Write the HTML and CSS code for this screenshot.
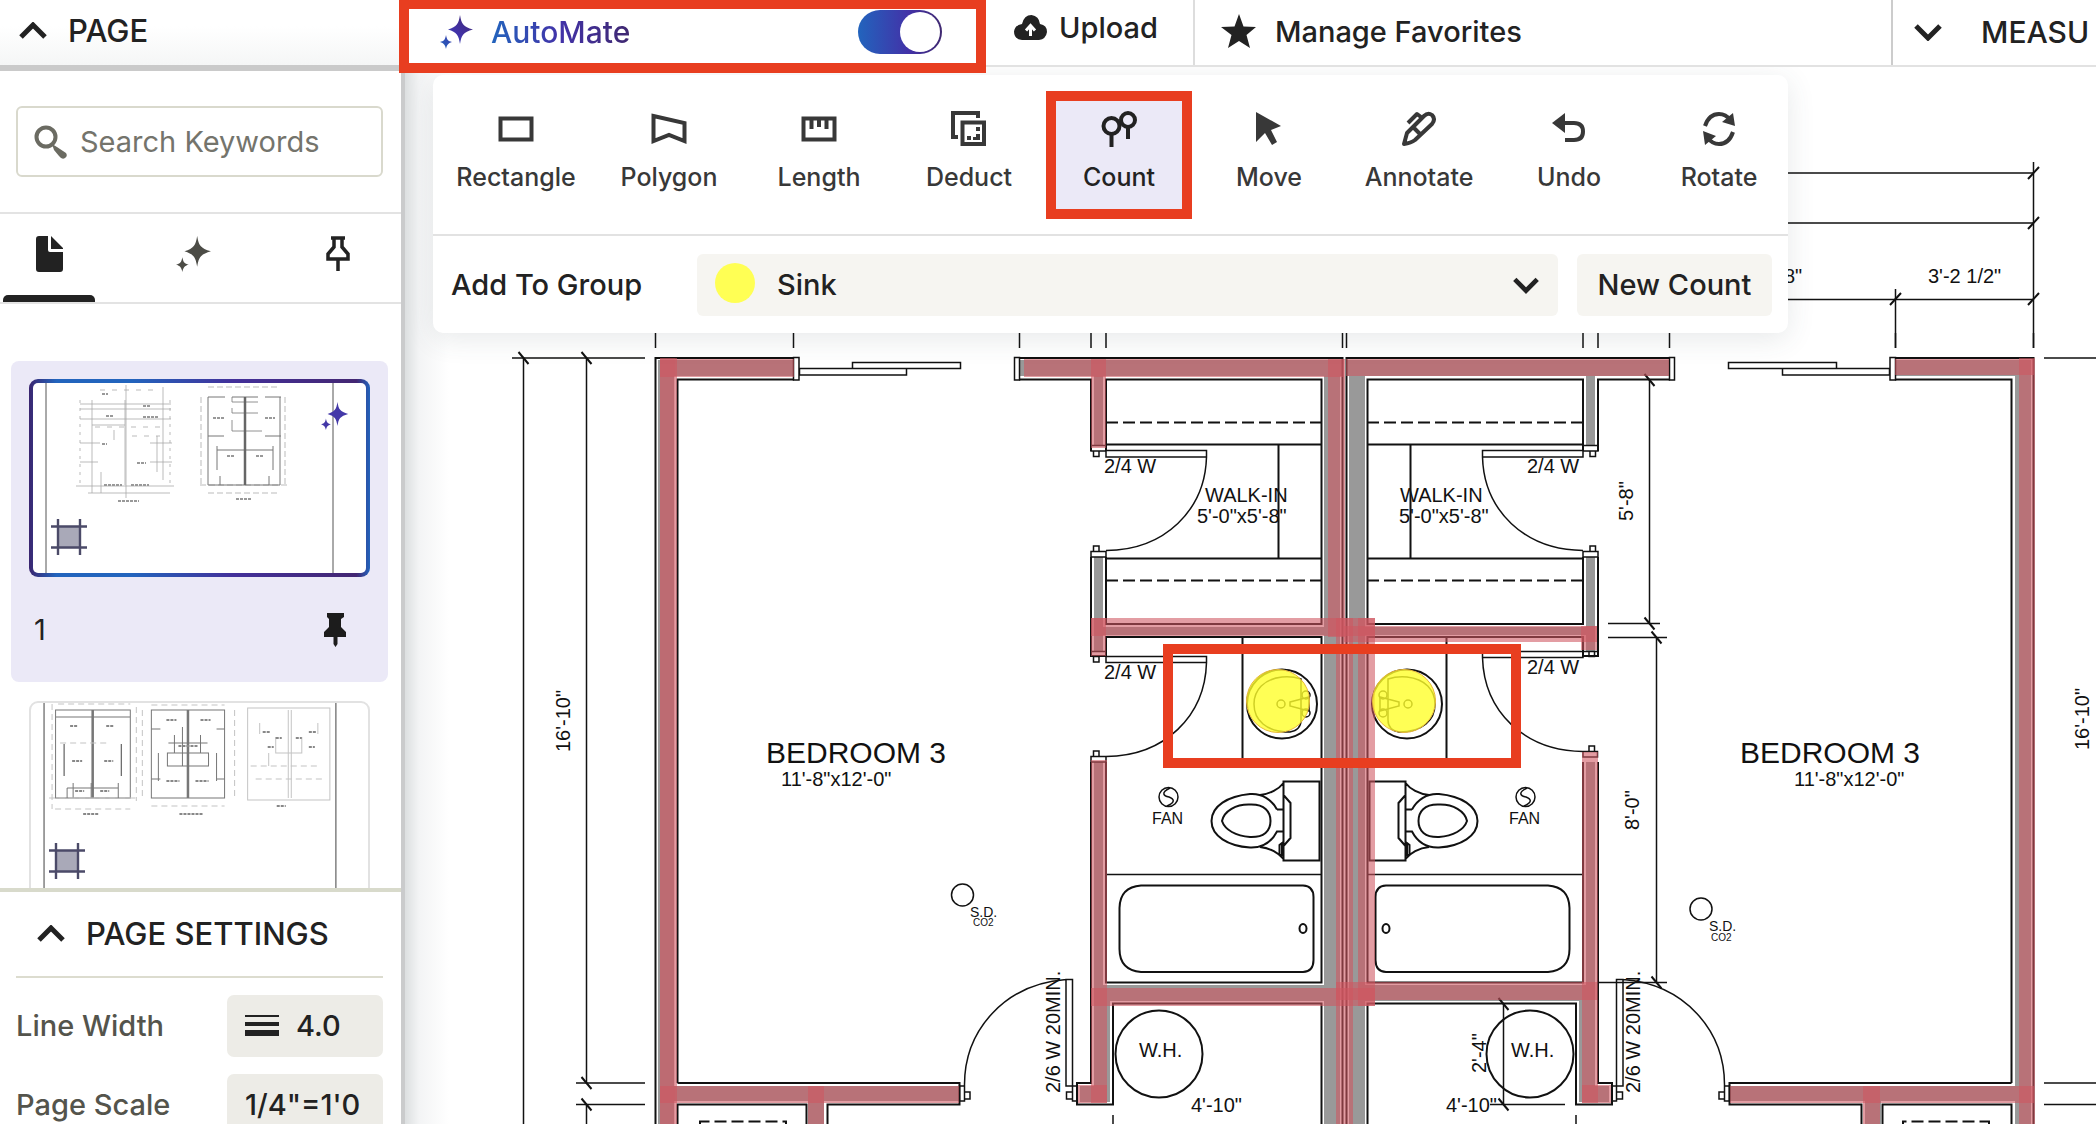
FILE: index.html
```html
<!DOCTYPE html>
<html lang="en">
<head>
<meta charset="utf-8">
<title>Takeoff plan</title>
<link rel="stylesheet" href="styles.css">
</head>
<body>
<svg class="defs" aria-hidden="true">
  <defs>
    <linearGradient id="brand" x1="0" y1="1" x2="1" y2="0"><stop offset="0" stop-color="#2264bd"/><stop offset=".5" stop-color="#4232a8"/><stop offset="1" stop-color="#3f2870"/></linearGradient>
    <symbol id="sparkle" viewBox="0 0 34 34"><path d="M20 0C21.500 9 23 11.500 33 14.500C23 17.500 21.500 20 20 29C18.500 20 17 17.500 8 14.500C17 11.500 18.500 9 20 0ZM6 20C7 25 8 26 12 27C8 28.500 7 29.500 6 34C5 29.500 4 28.500 0 27C4 26 5 25 6 20Z"/></symbol>
    <symbol id="chevron" viewBox="0 0 30 18"><path d="M3 3L15 15L27 3" fill="none" stroke="#222" stroke-width="5"/></symbol>
    <symbol id="crop" viewBox="0 0 36 36"><path d="M7 7H29V29H7Z" fill="#a9a9b8"/><path d="M7 0V36M29 0V36M0 7.500H36M0 28.500H36" stroke="#4b4a68" stroke-width="2.400" fill="none"/></symbol>
  </defs>
</svg>
<div class="app">
  <aside class="sidebar">
    <button class="side-head"><svg class="chev flip"><use href="#chevron"/></svg>PAGE</button>
    <div class="search">
      <label class="search-box">
        <svg width="34" height="34" viewBox="0 0 34 34"><circle cx="12" cy="12" r="9.500" fill="none" stroke="#6b6b62" stroke-width="4"/><path d="M18 19L23 22L32 28Q34 31 31 33Q28 35 25 31L20 25Z" fill="#6b6b62"/></svg>
        <input type="search" placeholder="Search Keywords" aria-label="Search Keywords">
      </label>
    </div>
    <nav class="tabs">
      <button class="tab active" aria-label="Pages"><svg width="28" height="36" viewBox="0 0 28 36"><path d="M3 0H12V14Q12 16 14 16H27V33Q27 36 24 36H3Q0 36 0 33V3Q0 0 3 0ZM15 0L27 12V13H15Z" fill="#222"/></svg></button>
      <button class="tab" aria-label="AutoMate"><svg width="36" height="36" fill="#4c4c46"><use href="#sparkle"/></svg></button>
      <button class="tab" aria-label="Pinned"><svg width="24" height="36" viewBox="0 0 24 36"><path d="M5 2H19M8 2V11L2 18V23H22V18L16 11V2M12 23V35" fill="none" stroke="#222" stroke-width="3.500"/></svg></button>
    </nav>
    <div class="pages">
      <article class="card selected">
        <div class="thumb">
          <svg viewBox="33 383 333 190" preserveAspectRatio="none">
            <path d="M46 383V573M333 383V573" stroke="#555" fill="none"/>
            <g fill="none" stroke="#aaa" stroke-width=".8">
              <path d="M92 400V493M125 400V485M163 387V480M126 385V498M80 404H171M80 409H171M80 419H171M92 425H125M80 443H100M150 443H172M80 462H98M150 462H172M76 486H174M88 493H170M101 472V493M157 436V472M114 430V440"/>
              <path d="M80 400V485M170 400V485" stroke-dasharray="3 5"/>
              <path d="M100 390H160M95 427H160M132 436H160" stroke-dasharray="5 7"/>
              <path d="M201 397V485M285 397V485M200 485H288M208 493H280M208 387H280" stroke-dasharray="6 3"/>
            </g>
            <g fill="none" stroke="#777" stroke-width="1">
              <path d="M208 397V485H280V397M208 397H225M232 397H258M265 397H281M208 436H224M265 436H281M217 446V470M273 446V470M217 450H273M220 476V485M269 476V485" />
              <path d="M232 397V402H258M232 408V413H258M232 420V431H262" stroke-width=".8"/>
            </g>
            <path d="M245 397V485" stroke="#666" stroke-width="2.500"/>
            <path d="M106 416H114M143 406H150M143 417H158M137 463H146M102 444H107M102 394H108M213 418H224M265 418H275M227 456H234M256 456H263M236 499H252M118 501H139M104 485H122M131 485H149" stroke="#999" stroke-width="2" stroke-dasharray="3 1"/>
          </svg>
          <svg class="crop-icon"><use href="#crop"/></svg>
          <svg class="thumb-star" fill="#4338a8"><use href="#sparkle"/></svg>
        </div>
        <div class="card-foot"><span>1</span><svg width="22" height="34" viewBox="0 0 22 34"><path d="M3 0H20V4L17 6V14L22 19V24H0V19L5 14V6L3 4ZM9.500 24H13.500V31L11.500 34L9.500 31Z" fill="#1c1c1c"/></svg></div>
      </article>
      <article class="card">
        <div class="thumb plain">
          <svg viewBox="31 702 336 194" preserveAspectRatio="none">
            <path d="M44 702V896M335 702V896" stroke="#444" fill="none"/>
            <g fill="none" stroke="#777">
              <path d="M55.500 709H130V797H55.500ZM151 709H224V797H151ZM55 716H130M67 787H118M67 787V797M73 782V797M91 782V797M118 782V797"/>
              <path d="M64 743V775M121 743V775" stroke="#444"/>
              <path d="M167 752H208V765H167ZM174 734V752M200 734V752M182 726V765M158 752V780M216 752V780M151 728H160M216 728H224M151 778H160M216 778H224M168 742H207"/>
            </g>
            <path d="M92.500 709V797M187.500 709V797" stroke="#777" stroke-width="2.500"/>
            <g fill="none" stroke="#c4c4c4">
              <path d="M247 707H329V799H247ZM287.500 709V797M290.500 709V797M275 736V752H301V736M268 752V765M259 722V733M317 722V733"/>
              <path d="M52 703V808M136 706V800M142 709V797M234 709V797M49 797H136M55 808H130M151 805H224M58 703H130M151 704H224M60 742H110M250 765H320M255 778H325" stroke-dasharray="6 4"/>
            </g>
            <path d="M70 725H78M106 725H114M72 760H82M104 760H113M75 790H84M100 790H109M166 719H176M200 719H210M166 780H179M195 780H208M83 813H99M179 813H203M276 805H285M262 731H270M308 731H316M267 746H273M308 746H314M178 745H198M275 737H281M295 737H301" stroke="#888" stroke-width="2" stroke-dasharray="3 1"/>
          </svg>
          <svg class="crop-icon"><use href="#crop"/></svg>
        </div>
      </article>
    </div>
    <section class="settings">
      <button class="settings-head"><svg class="chev flip"><use href="#chevron"/></svg>PAGE SETTINGS</button>
      <div class="row"><span>Line Width</span><button class="value"><svg width="34" height="22" viewBox="0 0 34 22"><path d="M0 0H34V2H0ZM0 7H34V11H0ZM0 15H34V21H0Z" fill="#222"/></svg>4.0</button></div>
      <div class="row"><span>Page Scale</span><button class="value">1/4"=1'0</button></div>
    </section>
  </aside>

  <main class="main">
    <header class="topbar">
      <label class="automate">
        <svg width="34" height="34" fill="url(#brand)"><use href="#sparkle"/></svg>
        <span class="brand-text">AutoMate</span>
        <input type="checkbox" class="switch" checked>
      </label>
      <span class="mark"></span>
      <button class="upload"><svg width="34" height="26" viewBox="0 0 34 26"><path d="M8 25Q0 24 0 16.500Q1 10 8 9Q10 0 17.500 0Q25 1 26 9Q33 10 33 17Q32 24 25 25Z" fill="#222"/><path d="M16.500 21V12M12 15.500L16.500 10.500L21 15.500" fill="none" stroke="#fff" stroke-width="3"/></svg>Upload</button>
      <button class="favorites"><svg width="36" height="35" viewBox="0 0 36 35"><path d="M18 0L22.500 12.500L35 13L25.500 21L29 34L18 27L7 34L10.500 21L0 13L13.500 12.500Z" fill="#222"/></svg>Manage Favorites</button>
      <button class="measure"><svg class="chev"><use href="#chevron"/></svg>MEASU</button>
    </header>

    <div class="canvas">
      <svg class="plan" viewBox="405 67 1691 1057" preserveAspectRatio="xMinYMin slice">
        <defs>
          <!-- one half of the duplex; the other half is its mirror image -->
          <g id="half">
            <g class="gray">
              <path d="M658 360H674V1124H658ZM674 360H794V376H674ZM1019 360H1342V376H1019ZM1094 376H1103V445H1094ZM1094 557H1103V651H1094ZM1103 627H1324V635H1103ZM1324 376H1340V1124H1324ZM674 1086H959V1101H674ZM808 1101H824V1124H808ZM1094 762H1103V985H1094ZM1094 985H1324V1001H1094ZM1094 1001H1110V1102H1094ZM1080 1086H1094V1102H1080Z"/>
            </g>
            <g class="ln">
              <path d="M655.500 1124V358H794M677.500 1083V379.500H794M1019.500 358H1342.500V1124M1019 379.500H1091V451M1106 451V379.500H1321.500V624H1106V557M1091 557V656H1106V637H1321.500V982.500H1106V762M1091 762V1083H1077V1104.500H1113V1003.500H1321.500V1124"/>
              <path d="M1106 444.500H1321M1106 558.500H1321M1278.500 444V558M1242.500 637V765M677.500 1083H959.500V1104.500H827.500V1124M806.500 1124V1104.500H677.500V1124"/>
              <path d="M1106 422.500H1321M1106 580.500H1321M700 1124V1121.500H786V1124" stroke-dasharray="12 5"/>
              <path class="thin" d="M793.500 357.500H799V380H793.500ZM852.500 362.500H960.500V368.500H852.500ZM799.500 368.500H906.500V375H799.500ZM1014.500 357.500H1019.500V380H1014.500ZM1106 874.500H1321M1091 445.500H1106V451H1091ZM1093.500 451H1099V456.500H1093.500ZM1106 450.500H1206.500V457H1106ZM1206.500 457C1205 510 1165 550 1106 550.500M1093.500 546H1099V551.500H1093.500ZM1091 551.500H1106V557H1091ZM959.500 1086H964.500V1101H959.500ZM964.500 1092H970V1099H964.500ZM1066 979.500H1072.500V1086H1066ZM1072.500 1086H1077V1101H1072.500ZM1066.500 1092H1072.500V1099H1066.500ZM1066 979.500C1005 984 964 1030 964.500 1086M655.500 333V348M793.500 333V348M1019.500 333V348M1091 333V348M1106 333V348M1342.500 333V348M1113 1115V1124"/>
              <!-- toilet -->
              <path class="bold" d="M1283.500 781.500H1319.500V860.500H1283.500ZM1283.500 781.500V795L1290.500 803V838L1283.500 846M1277 809.500H1283.500V831.500H1277C1271 843 1262 848 1250 847.500C1228 846 1211.500 836 1211.500 821C1211.500 806 1228 796 1250 794C1262 793 1272 800 1277 809.500M1222 821C1224 811 1236 804 1250 804.500C1265 804 1270.500 812 1270.500 821C1270.500 831 1264 837.500 1250 837C1236 836 1225 830 1222 821ZM1260 795C1270 794 1279 789 1283.500 783M1260 847C1270 848 1279 853 1283.500 859M1279.500 845V855H1282V843Z"/>
              <!-- tub -->
              <path class="bold" d="M1141 885.500H1303Q1313.500 886 1313.500 897V960Q1313.500 971.500 1303 972H1141Q1119.500 970 1119.500 949V908Q1120 887 1141 885.500Z"/>
              <ellipse cx="1303" cy="928.500" rx="3.500" ry="4.500" class="bold"/>
              <circle cx="1159" cy="1054" r="43.500" class="bold"/>
              <!-- sink -->
              <ellipse cx="1282" cy="704" rx="35" ry="34.500" class="bold"/>
              <path class="thin" d="M1301 679Q1292 676 1282 677C1264 679 1254 690 1254 704C1254 720 1266 732 1290 732Q1301 730 1301 720ZM1290 702L1309 697V711L1290 706Z"/>
              <g class="thin"><circle cx="1281" cy="704" r="4"/><circle cx="1306" cy="695" r="4"/><circle cx="1306" cy="713" r="4"/></g>
            </g>
          </g>
          <path id="tick" d="M-5-6L5 6" stroke="#111" stroke-width="2"/>
        </defs>
        <use href="#half"/>
        <use href="#half" transform="translate(2689 0) scale(-1 1)"/>
        <g class="ln thin">
          <path d="M1093.500 656.500H1099V662H1093.500ZM1106 656.500H1206.500V662.500H1106ZM1206.500 662.500C1205 716 1165 756 1106 756.500M1093.500 751H1099V756.500H1093.500ZM1091 756.500H1106V762H1091Z"/>
          <path d="M1589 651.500H1594.500V656.500H1589ZM1482.500 651.500H1583V657.500H1482.500ZM1482.500 657.500C1484 711 1524 751 1583 751.500M1589 746H1594.500V751.500H1589ZM1583 751.500H1597.500V757H1583ZM1091 651.500H1106M1583 651.500H1597"/>
          <path d="M512 358H645M523.500 358V1124M586.500 358V1083M586.500 1104.500V1124M576 1083H645M576 1104.500H645"/>
          <path d="M1700 173H2034M1700 223H2034M1700 299.500H2034M2033.500 162V348M1895.500 289V348M2044 358H2096M2044 1083H2096M2044 1104.500H2096"/>
          <path d="M1649.500 380V624M1608 623.500H1660M1608 637.500H1667M1656.500 637V982M1597 982.500H1667M1503.500 1003V1104M1490 1104.500H1565"/>
          <circle cx="1168.500" cy="797" r="9.500"/><path d="M1170 788C1160 793 1164 796 1169 797C1174 799 1176 802 1167 806"/>
          <circle cx="1525.500" cy="797" r="9.500"/><path d="M1527 788C1517 793 1521 796 1526 797C1531 799 1533 802 1524 806"/>
          <circle cx="962.500" cy="895" r="11"/><circle cx="1701" cy="909" r="11"/>
        </g>
        <use href="#tick" x="523.500" y="358"/><use href="#tick" x="586.500" y="358"/><use href="#tick" x="586.500" y="1083"/><use href="#tick" x="586.500" y="1104.500"/>
        <use href="#tick" x="1649.500" y="380"/><use href="#tick" x="1649.500" y="623.500"/><use href="#tick" x="1656.500" y="637.500"/><use href="#tick" x="1656.500" y="982.500"/><use href="#tick" x="1503.500" y="1004"/><use href="#tick" x="1503.500" y="1104.500"/>
        <path d="M2028 179L2039 167M2028 229L2039 217M2028 305L2039 293M1890 305L1901 293" stroke="#111" stroke-width="2"/>

        <!-- wall takeoffs -->
        <g class="wall">
          <path d="M660 358H677V1124H660Z"/><path d="M660 358H675V1124H660Z" opacity=".4"/>
          <path d="M660 359H794V377H660Z"/>
          <path d="M1024 359H1344V377H1024Z"/><path d="M1346 359H1669V376H1346Z"/>
          <path d="M1091 359H1106V448H1091Z"/>
          <path d="M1328 359H1345V637H1328Z"/>
          <path d="M1091 618H1375V636H1091Z"/><path d="M1091 618H1106V656H1091Z"/>
          <path d="M1344 626H1597V642H1344Z"/><path d="M1581 626H1597V650H1581Z"/>
          <path d="M1336 618H1353V1124H1336Z"/><path d="M1358 618H1375V1006H1358Z"/>
          <path d="M1091 760H1107V1103H1091Z"/><path d="M1582 752H1598V1103H1582Z"/>
          <path d="M1091 988H1375V1006H1091Z"/><path d="M1336 982H1597V1000H1336Z"/>
          <path d="M1078 1085H1107V1103H1078Z"/><path d="M1582 1085H1611V1103H1582Z"/>
          <path d="M660 1086H959V1103H660Z"/><path d="M808 1086H824V1124H808Z"/>
          <path d="M1895 359H2034V375H1895Z"/><path d="M2019 358H2035V1124H2019Z"/>
          <path d="M1730 1086H2034V1103H1730Z"/><path d="M1863 1086H1880V1124H1863Z"/>
        </g>

        <g class="plan-text">
          <text x="766" y="763" class="room">BEDROOM 3</text><text x="781" y="786">11'-8"x12'-0"</text>
          <text x="1740" y="763" class="room">BEDROOM 3</text><text x="1794" y="786">11'-8"x12'-0"</text>
          <text x="1104" y="473">2/4 W</text><text x="1527" y="473">2/4 W</text>
          <text x="1104" y="679">2/4 W</text><text x="1527" y="674">2/4 W</text>
          <text x="1205" y="502">WALK-IN</text><text x="1197" y="523">5'-0"x5'-8"</text>
          <text x="1400" y="502">WALK-IN</text><text x="1399" y="523">5'-0"x5'-8"</text>
          <text x="1152" y="824" class="small">FAN</text><text x="1509" y="824" class="small">FAN</text>
          <text x="1139" y="1057">W.H.</text><text x="1511" y="1057">W.H.</text>
          <text x="1191" y="1112">4'-10"</text><text x="1446" y="1112">4'-10"</text>
          <text x="1928" y="283">3'-2 1/2"</text><text x="1784" y="283">8"</text>
          <text x="970" y="917" class="note">S.D.</text><text x="973" y="926" class="tiny">CO2</text>
          <text x="1709" y="931" class="note">S.D.</text><text x="1711" y="941" class="tiny">CO2</text>
          <text transform="translate(570 752) rotate(-90)">16'-10"</text>
          <text transform="translate(2089 750) rotate(-90)">16'-10"</text>
          <text transform="translate(1633 521) rotate(-90)">5'-8"</text>
          <text transform="translate(1639 830) rotate(-90)">8'-0"</text>
          <text transform="translate(1486 1073) rotate(-90)">2'-4"</text>
          <text transform="translate(1060 1093) rotate(-90)">2/6 W 20MIN.</text>
          <text transform="translate(1640 1093) rotate(-90)">2/6 W 20MIN.</text>
        </g>

        <circle cx="1278" cy="701" r="31.500" class="count"/><circle cx="1404" cy="701" r="31.500" class="count"/>
        <rect x="1168" y="649" width="348" height="114" fill="none" stroke="#e83e20" stroke-width="10"/>
      </svg>

      <section class="tools">
        <div class="tool-row">
          <button class="tool"><svg viewBox="0 0 36 36"><path d="M2.500 7.500H33.500V28.500H2.500Z" fill="none" stroke="currentColor" stroke-width="4"/></svg>Rectangle</button>
          <button class="tool"><svg viewBox="0 0 36 36"><path d="M2.500 5L33.500 12V30L18 24L2.500 30Z" fill="none" stroke="currentColor" stroke-width="4"/></svg>Polygon</button>
          <button class="tool"><svg viewBox="0 0 36 36"><path d="M2.500 7.500H33.500V28.500H2.500ZM10.500 8V18M18 8V16M25.500 8V18" fill="none" stroke="currentColor" stroke-width="4"/></svg>Length</button>
          <button class="tool"><svg viewBox="0 0 36 36"><path d="M27 7V2H2V26H7M11.500 11.500H33V33H11.500Z" fill="none" stroke="currentColor" stroke-width="4"/><path d="M25 16H29V20H25ZM16 25H20V29H16ZM25 23H29V29H22V26H25Z" fill="currentColor"/></svg>Deduct</button>
          <button class="tool current"><svg viewBox="0 0 36 36"><g fill="none" stroke="currentColor" stroke-width="4"><circle cx="10.500" cy="15" r="8"/><circle cx="27" cy="9" r="7"/><path d="M10.500 23V36M27 16V28"/></g></svg>Count</button>
          <button class="tool"><svg viewBox="0 0 36 36"><path d="M5 1L30 15L20 19L26 31L21 34L14 22L5 31Z" fill="currentColor"/></svg>Move</button>
          <button class="tool"><svg viewBox="0 0 36 36"><g fill="none" stroke="currentColor" stroke-width="4" stroke-linejoin="round"><path d="M3 33L6 22L23 5Q27 1 31 4Q35 8 31 13L14 29Q10 32 3 33ZM12 16L20 24M7 12L16 3L20 6"/></g></svg>Annotate</button>
          <button class="tool"><svg viewBox="0 0 36 36"><path d="M1 12L14 2V22Z" fill="currentColor"/><path d="M13 12H23Q32 12 32 20.500Q32 29 23 29H14" fill="none" stroke="currentColor" stroke-width="4"/></svg>Undo</button>
          <button class="tool"><svg viewBox="0 0 36 36"><path d="M4 15Q8 3 18 3Q25 3 29 9M32 21Q28 33 18 33Q11 33 7 27" fill="none" stroke="currentColor" stroke-width="4"/><path d="M32 2L34 15L21 11ZM2 20L15 25L4 34Z" fill="currentColor"/></svg>Rotate</button>
        </div>
        <div class="group-row">
          <label for="group">Add To Group</label>
          <div class="select-wrap"><span class="dot"></span><select id="group"><option>Sink</option></select><svg class="chev"><use href="#chevron"/></svg></div>
          <button class="new-count">New Count</button>
        </div>
      </section>
    </div>
  </main>
</div>
</body>
</html>
```
FILE: styles.css
```css
* { box-sizing: border-box; }
body { margin: 0; font-family: Inter, "Open Sans", sans-serif; font-size: 29px; line-height: 36px; font-weight: 500; color: #222; background: #fff; }
button, input, select { font: inherit; color: inherit; background: none; border: 0; padding: 0; margin: 0; }
svg { flex: none; display: block; }
.defs { position: absolute; width: 0; height: 0; }
.app { display: flex; height: 100vh; overflow: hidden; }
.chev { width: 30px; height: 18px; }
.flip { transform: rotate(180deg); }

.sidebar { flex: none; width: 405px; display: flex; flex-direction: column; border-right: 4px solid #cacbcc; }
.side-head { flex: none; display: flex; align-items: center; gap: 20px; height: 71px; padding: 0 18px 3px; border-bottom: 6px solid #cacaca; background: linear-gradient(#fff 40%, #f5f6f6); font-size: 31px; }
.search { flex: none; padding: 35px 18px 35px 16px; border-bottom: 2px solid #e3e3e3; }
.search-box { display: flex; align-items: center; gap: 12px; height: 71px; padding: 0 16px; border: 2px solid #d9d9cd; border-radius: 6px; }
.search-box input { flex: 1; min-width: 0; font-weight: 400; outline: 0; }
.search-box input::placeholder { color: #74746c; opacity: 1; }
.tabs { flex: none; display: flex; justify-content: space-between; height: 90px; padding: 0 18px 0 3px; border-bottom: 2px solid #e3e3e3; }
.tab { width: 92px; display: flex; justify-content: center; align-items: center; padding: 0 0 8px 2px; position: relative; }
.tab.active::after { content: ""; position: absolute; left: 0; right: 0; bottom: 0; height: 7px; background: #222; border-radius: 5px 5px 0 0; }
.pages { flex: 1; min-height: 0; overflow: hidden; padding: 57px 13px 0 11px; }
.card { padding: 18px; border-radius: 8px; }
.card.selected { background: #ebe9f7; padding-bottom: 0; }
.thumb { position: relative; height: 198px; border: 4px solid transparent; border-radius: 9px; background: linear-gradient(#fff, #fff) padding-box, linear-gradient(90deg, #3a2570, #2264bd 8%, #2264bd 30%, #43309a 60%, #432672 96%, #2264bd) border-box; }
.thumb > svg:first-child { width: 100%; height: 100%; }
.thumb.plain { border: 2px solid #e2e2e2; background: #fff; }
.crop-icon { position: absolute; left: 18px; bottom: 18px; width: 36px; height: 36px; }
.thumb-star { position: absolute; right: 17px; top: 19px; width: 28px; height: 28px; }
.card-foot { display: flex; justify-content: space-between; align-items: center; height: 105px; padding: 0 24px 0 5px; font-weight: 400; }
.selected + .card { padding-top: 19px; }
.settings { flex: 0 0 21vh; overflow: hidden; border-top: 4px solid #d8dacb; padding: 0 18px 0 16px; }
.settings-head { display: flex; align-items: center; gap: 20px; width: 100%; height: 86px; padding-left: 20px; border-bottom: 2px solid #dcdccf; font-size: 31px; white-space: nowrap; }
.row { display: flex; align-items: center; justify-content: space-between; margin-top: 17px; color: #54544c; }
.value { display: flex; align-items: center; justify-content: flex-start; gap: 17px; width: 156px; height: 62px; padding-left: 18px; border-radius: 7px; background: #edece7; color: #222; white-space: nowrap; }

.main { flex: 1; min-width: 0; display: flex; flex-direction: column; }
.topbar { flex: none; position: relative; z-index: 3; display: flex; height: 67px; border-bottom: 2px solid #e2e2e2; background: #fff; }
.topbar button { display: flex; align-items: center; white-space: nowrap; }
.automate { flex: none; width: 581px; display: flex; align-items: center; gap: 17px; padding: 0 44px 2px 35px; font-size: 30px; }
.brand-text { background: linear-gradient(90deg, #2264bd, #4232a8 50%, #3f2870); -webkit-background-clip: text; background-clip: text; color: transparent; }
.switch { appearance: none; margin-left: auto; display: flex; justify-content: flex-end; width: 84px; height: 44px; padding: 2px; border-radius: 22px; background: linear-gradient(90deg, #2264bd, #4232a8 60%, #3f2870); }
.switch::before { content: ""; width: 40px; height: 40px; border-radius: 50%; background: #fff; }
.mark { position: absolute; left: -6px; top: -1px; width: 587px; height: 74px; border: 10px solid #e83e20; pointer-events: none; }
.topbar .upload { flex: none; width: 207px; padding: 0 0 10px 28px; gap: 11px; }
.topbar .favorites { flex: 1; padding: 0 0 2px 26px; gap: 18px; border-left: 2px solid #ddd; }
.topbar .measure { flex: none; width: 205px; padding: 0 0 2px 20px; gap: 38px; border-left: 2px solid #ccc; font-size: 30px; }

.canvas { flex: 1; min-height: 0; position: relative; overflow: hidden; background: linear-gradient(90deg, #dcdfe0, #f3f4f5 14px, #fff 44px); }
.plan { width: 100%; height: 100%; }
.ln { fill: none; stroke: #111; stroke-width: 2; }
.thin { stroke-width: 1.500; }
.bold { stroke-width: 2; }
.gray { fill: #999; }
.wall { fill: #ce5661; fill-opacity: .58; }
.plan-text { font: 20px "Liberation Sans", Arial, sans-serif; fill: #111; }
.plan-text .room { font-size: 30px; }
.plan-text .small { font-size: 16px; }
.plan-text .note { font-size: 14px; }
.plan-text .tiny { font-size: 10px; }
.count { fill: #ffff2a; fill-opacity: .8; stroke: #e8b83a; stroke-width: 1; }

.tools { position: absolute; left: 28px; top: 8px; width: 1355px; background: #fff; border-radius: 10px; box-shadow: 0 6px 28px rgba(60, 70, 80, .12); }
.tool-row { display: flex; gap: 4px; height: 161px; padding: 16px 0 15px 10px; border-bottom: 2px solid #e2e2e2; }
.tool { flex: none; width: 146px; display: flex; flex-direction: column; align-items: center; gap: 14px; padding-top: 20px; font-size: 25px; line-height: 32px; color: #383838; }
.tool:first-child + .tool { margin-left: 3px; }
.tool svg { width: 36px; height: 36px; }
.tool.current { background: #ebe9f7; color: #222; box-shadow: inset 0 0 0 10px #e83e20; }
.group-row { display: flex; align-items: center; gap: 19px; height: 97px; padding: 0 16px 0 18px; }
.group-row label { width: 227px; }
.select-wrap { flex: 1; display: flex; align-items: center; position: relative; height: 62px; background: #f6f5f1; border-radius: 6px; }
.select-wrap select { appearance: none; width: 100%; height: 100%; padding-left: 80px; }
.dot { position: absolute; left: 18px; top: 9px; width: 40px; height: 40px; border-radius: 50%; background: #ffff54; }
.select-wrap .chev { position: absolute; right: 18px; width: 28px; }
.new-count { height: 62px; width: 195px; border-radius: 6px; background: #f6f5f1; white-space: nowrap; }
```
